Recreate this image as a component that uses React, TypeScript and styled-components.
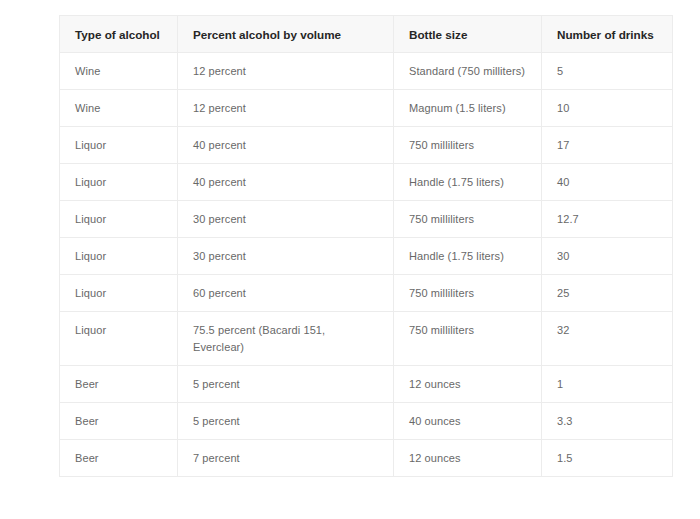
import React from "react";
import styled, { createGlobalStyle } from "styled-components";

const Global = createGlobalStyle`
  html, body { margin: 0; padding: 0; background: #ffffff; }
  body { font-family: "Liberation Sans", Arial, Helvetica, sans-serif; }
`;

const Page = styled.div`
  padding: 15px 28px 0 59px;
  width: 700px;
  height: 519px;
  box-sizing: border-box;
`;

const Table = styled.table`
  border-collapse: collapse;
  table-layout: fixed;
  width: 613px;
  border: 1px solid #ececec;
`;

const HeadCell = styled.th<{ $w: number }>`
  width: ${(p) => p.$w}px;
  box-sizing: border-box;
  background: #f8f8f8;
  text-align: left;
  font-weight: bold;
  font-size: 11.7px;
  color: #262626;
  padding: 10px 12px 9px 15px;
  line-height: 17px;
  white-space: nowrap;
  border: 1px solid #ececec;
`;

const Cell = styled.td`
  text-align: left;
  vertical-align: top;
  font-size: 11px;
  letter-spacing: 0.1px;
  color: #686868;
  padding: 10px 12px 9px 15px;
  line-height: 17px;
  white-space: nowrap;
  border: 1px solid #ececec;
`;

const Line = styled.span`
  display: block;
`;

const cols: [string, number][] = [
  ["Type of alcohol", 118],
  ["Percent alcohol by volume", 216],
  ["Bottle size", 148],
  ["Number of drinks", 131],
];

const rows: (string | string[])[][] = [
  ["Wine", "12 percent", "Standard (750 milliters)", "5"],
  ["Wine", "12 percent", "Magnum (1.5 liters)", "10"],
  ["Liquor", "40 percent", "750 milliliters", "17"],
  ["Liquor", "40 percent", "Handle (1.75 liters)", "40"],
  ["Liquor", "30 percent", "750 milliliters", "12.7"],
  ["Liquor", "30 percent", "Handle (1.75 liters)", "30"],
  ["Liquor", "60 percent", "750 milliliters", "25"],
  ["Liquor", ["75.5 percent (Bacardi 151,", "Everclear)"], "750 milliliters", "32"],
  ["Beer", "5 percent", "12 ounces", "1"],
  ["Beer", "5 percent", "40 ounces", "3.3"],
  ["Beer", "7 percent", "12 ounces", "1.5"],
];

export default function App() {
  return (
    <>
      <Global />
      <Page>
        <Table>
          <thead>
            <tr>
              {cols.map(([label, w]) => (
                <HeadCell key={label} $w={w}>
                  {label}
                </HeadCell>
              ))}
            </tr>
          </thead>
          <tbody>
            {rows.map((r, i) => (
              <tr key={i}>
                {r.map((c, j) => (
                  <Cell key={j}>
                    {Array.isArray(c) ? c.map((l) => <Line key={l}>{l}</Line>) : c}
                  </Cell>
                ))}
              </tr>
            ))}
          </tbody>
        </Table>
      </Page>
    </>
  );
}
